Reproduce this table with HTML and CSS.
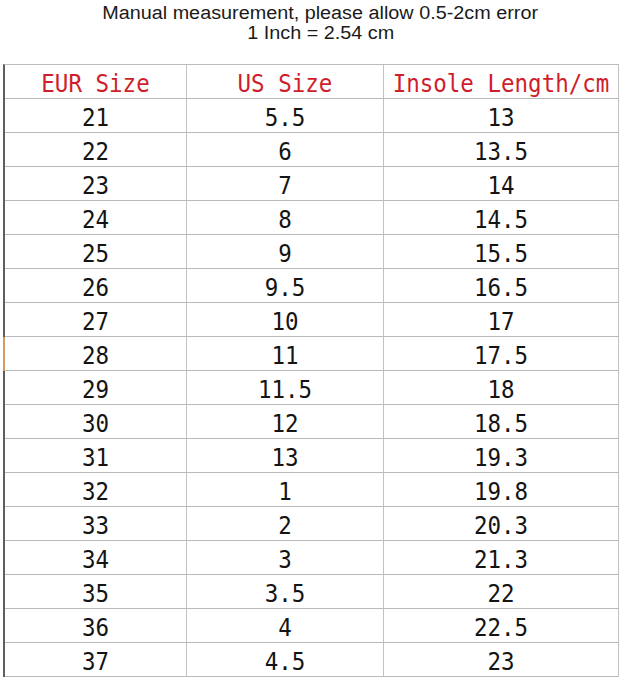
FILE: index.html
```html
<!DOCTYPE html>
<html>
<head>
<meta charset="utf-8">
<link rel="stylesheet" href="styles.css">
</head>
<body>
<div class="title">
  <div class="line"><span class="stretch">Manual measurement, please allow 0.5-2cm error</span></div>
  <div class="line"><span class="stretch">1 Inch = 2.54 cm</span></div>
</div>
<div class="chart">
  <div class="cell head"><span class="t">EUR Size</span></div>
  <div class="cell head"><span class="t">US Size</span></div>
  <div class="cell head"><span class="t">Insole Length/cm</span></div>

  <div class="cell"><span class="t">21</span></div><div class="cell"><span class="t">5.5</span></div><div class="cell"><span class="t">13</span></div>
  <div class="cell"><span class="t">22</span></div><div class="cell"><span class="t">6</span></div><div class="cell"><span class="t">13.5</span></div>
  <div class="cell"><span class="t">23</span></div><div class="cell"><span class="t">7</span></div><div class="cell"><span class="t">14</span></div>
  <div class="cell"><span class="t">24</span></div><div class="cell"><span class="t">8</span></div><div class="cell"><span class="t">14.5</span></div>
  <div class="cell"><span class="t">25</span></div><div class="cell"><span class="t">9</span></div><div class="cell"><span class="t">15.5</span></div>
  <div class="cell"><span class="t">26</span></div><div class="cell"><span class="t">9.5</span></div><div class="cell"><span class="t">16.5</span></div>
  <div class="cell"><span class="t">27</span></div><div class="cell"><span class="t">10</span></div><div class="cell"><span class="t">17</span></div>
  <div class="cell mark"><span class="t">28</span></div><div class="cell"><span class="t">11</span></div><div class="cell"><span class="t">17.5</span></div>
  <div class="cell"><span class="t">29</span></div><div class="cell"><span class="t">11.5</span></div><div class="cell"><span class="t">18</span></div>
  <div class="cell"><span class="t">30</span></div><div class="cell"><span class="t">12</span></div><div class="cell"><span class="t">18.5</span></div>
  <div class="cell"><span class="t">31</span></div><div class="cell"><span class="t">13</span></div><div class="cell"><span class="t">19.3</span></div>
  <div class="cell"><span class="t">32</span></div><div class="cell"><span class="t">1</span></div><div class="cell"><span class="t">19.8</span></div>
  <div class="cell"><span class="t">33</span></div><div class="cell"><span class="t">2</span></div><div class="cell"><span class="t">20.3</span></div>
  <div class="cell"><span class="t">34</span></div><div class="cell"><span class="t">3</span></div><div class="cell"><span class="t">21.3</span></div>
  <div class="cell"><span class="t">35</span></div><div class="cell"><span class="t">3.5</span></div><div class="cell"><span class="t">22</span></div>
  <div class="cell"><span class="t">36</span></div><div class="cell"><span class="t">4</span></div><div class="cell"><span class="t">22.5</span></div>
  <div class="cell"><span class="t">37</span></div><div class="cell"><span class="t">4.5</span></div><div class="cell"><span class="t">23</span></div>
</div>
</body>
</html>
```

FILE: styles.css
```css
html, body {
  margin: 0;
  padding: 0;
  background: #ffffff;
}

.title {
  padding-top: 3px;
  margin-bottom: 21px;
  font-family: "Liberation Sans", Arial, sans-serif;
  font-size: 18px;
  line-height: 20px;
  color: #1a1a1a;
  text-align: center;
}

.title .line {
  height: 20px;
}

.stretch {
  display: inline-block;
  transform: scaleX(1.1);
  padding-left: 0;
}

.chart {
  display: grid;
  grid-template-columns: 182px 197px 235px;
  width: fit-content;
  margin-left: 3px;
  border-left: 2px solid #5e5e5e;
  border-top: 1px solid #bdbdbd;
}

.cell {
  box-sizing: border-box;
  height: 34px;
  border-right: 1px solid #c2c2c2;
  border-bottom: 1px solid #b9b9b9;
  display: flex;
  align-items: center;
  justify-content: center;
  padding-top: 3px;
  font-family: "DejaVu Sans Mono", "Liberation Mono", monospace;
  font-size: 22.5px;
  color: #141414;
}

.cell .t {
  display: inline-block;
  transform: scaleY(1.12);
  white-space: pre;
}

.cell.head {
  color: #cf1d2b;
  padding-top: 2px;
}

.cell.mark {
  box-shadow: -2px 0 0 0 #d39a64;
}
```
